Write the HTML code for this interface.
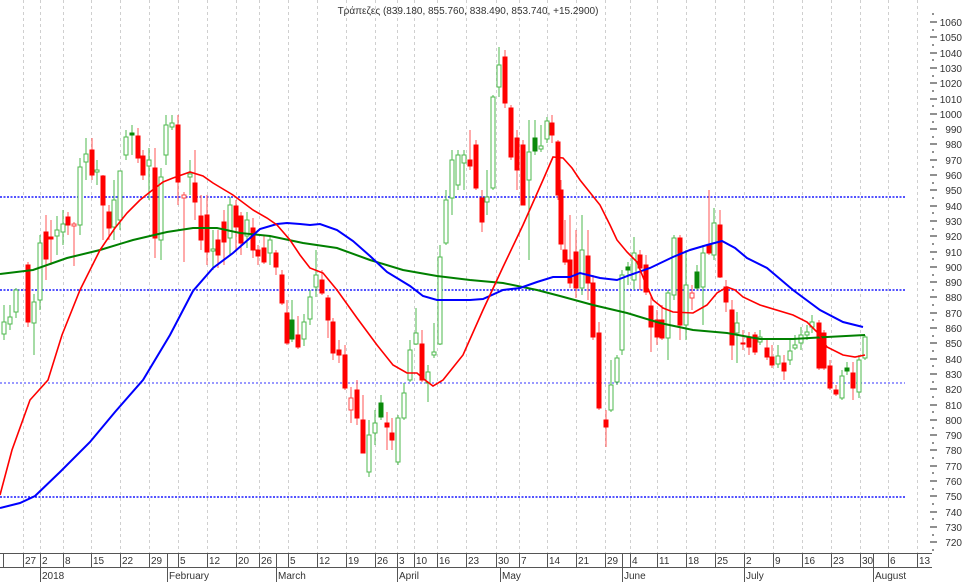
<!DOCTYPE html>
<html><head><meta charset="utf-8"><style>
html,body{margin:0;padding:0;background:#fff;}
svg{display:block;font-family:"Liberation Sans",sans-serif;}
.g{fill:#fff;stroke:#4db84d;stroke-width:1}
.r{fill:#f00;stroke:#f00;stroke-width:1}
.rh{fill:#fff;stroke:#f44;stroke-width:1}
.dg{fill:#0a8a0a;stroke:#0a8a0a;stroke-width:1}
.wg{stroke:#4db84d;stroke-width:1}
.wr{stroke:#f55;stroke-width:1}
.t{font-size:10px;fill:#333}
</style></head><body>
<svg width="966" height="582" viewBox="0 0 966 582" xmlns="http://www.w3.org/2000/svg">
<rect width="966" height="582" fill="#fff"/>
<g stroke="#cfcfcf" stroke-width="1" stroke-dasharray="3,3">
<path d="M23.5 0V553M40.5 0V553M63.5 0V553M91.5 0V553M120.5 0V553M149.5 0V553M178.5 0V553M207.5 0V553M236.5 0V553M259.5 0V553M288.5 0V553M317.5 0V553M346.5 0V553M375.5 0V553M397.5 0V553M414.5 0V553M437.5 0V553M466.5 0V553M496.5 0V553M519.5 0V553M547.5 0V553M576.5 0V553M605.5 0V553M630.5 0V553M657.5 0V553M686.5 0V553M715.5 0V553M744.5 0V553M773.5 0V553M802.5 0V553M831.5 0V553M860.5 0V553M888.5 0V553M917.5 0V553"/>
</g>
<g stroke="#1a1aff" stroke-width="1.5" stroke-dasharray="2,1.5">
<path d="M0 197H905M0 290H905M0 497H905"/>
</g>
<path d="M0 383H905" stroke="#3333ff" stroke-width="1" stroke-dasharray="2,2"/>

<text x="468" y="14" class="t" text-anchor="middle">Τράπεζες (839.180, 855.760, 838.490, 853.740, +15.2900)</text>

<!-- candles -->
<g id="c">
<line x1="4" y1="305" x2="4" y2="340" class="wg"/><rect x="2" y="322" width="4" height="12" class="g"/>
<line x1="10" y1="305" x2="10" y2="330" class="wg"/><rect x="8" y="317" width="4" height="7" class="g"/>
<line x1="16" y1="288" x2="16" y2="318" class="wg"/><rect x="14" y="290" width="4" height="22" class="g"/>
<line x1="28" y1="262" x2="28" y2="327" class="wr"/><rect x="26" y="265" width="4" height="57" class="r"/>
<line x1="34" y1="294" x2="34" y2="355" class="wg"/><rect x="32" y="302" width="4" height="21" class="g"/>
<line x1="40" y1="235" x2="40" y2="310" class="wg"/><rect x="38" y="243" width="4" height="57" class="g"/>
<line x1="46" y1="215" x2="46" y2="280" class="wr"/><rect x="44" y="232" width="4" height="27" class="r"/>
<line x1="51" y1="220" x2="51" y2="265" class="wr"/><rect x="49" y="237" width="4" height="2" class="r"/>
<line x1="57" y1="216" x2="57" y2="255" class="wg"/><rect x="55" y="230" width="4" height="6" class="g"/>
<line x1="63" y1="210" x2="63" y2="245" class="wg"/><rect x="61" y="224" width="4" height="8" class="g"/>
<line x1="68" y1="212" x2="68" y2="235" class="wr"/><rect x="66" y="217" width="4" height="8" class="r"/>
<line x1="74" y1="222" x2="74" y2="266" class="wr"/><rect x="72" y="224" width="4" height="2" class="rh"/>
<line x1="80" y1="158" x2="80" y2="235" class="wg"/><rect x="78" y="167" width="4" height="58" class="g"/>
<line x1="86" y1="138" x2="86" y2="180" class="wg"/><rect x="84" y="154" width="4" height="8" class="g"/>
<line x1="92" y1="138" x2="92" y2="180" class="wr"/><rect x="90" y="150" width="4" height="25" class="r"/>
<line x1="97" y1="160" x2="97" y2="185" class="wg"/><rect x="95" y="170" width="4" height="2" class="g"/>
<line x1="103" y1="175" x2="103" y2="240" class="wr"/><rect x="101" y="176" width="4" height="29" class="r"/>
<line x1="109" y1="205" x2="109" y2="240" class="wr"/><rect x="107" y="212" width="4" height="16" class="r"/>
<line x1="114" y1="180" x2="114" y2="240" class="wg"/><rect x="112" y="200" width="4" height="27" class="g"/>
<line x1="120" y1="171" x2="120" y2="230" class="wg"/><rect x="118" y="171" width="4" height="49" class="g"/>
<line x1="126" y1="130" x2="126" y2="160" class="wg"/><rect x="124" y="137" width="4" height="18" class="g"/>
<line x1="132" y1="125" x2="132" y2="155" class="wg"/><rect x="130" y="133" width="4" height="2" class="dg"/>
<line x1="138" y1="128" x2="138" y2="163" class="wr"/><rect x="136" y="136" width="4" height="22" class="r"/>
<line x1="143" y1="150" x2="143" y2="180" class="wr"/><rect x="141" y="156" width="4" height="19" class="r"/>
<line x1="149" y1="148" x2="149" y2="200" class="wg"/><rect x="147" y="160" width="4" height="6" class="g"/>
<line x1="155" y1="148" x2="155" y2="258" class="wr"/><rect x="153" y="168" width="4" height="70" class="r"/>
<line x1="161" y1="168" x2="161" y2="260" class="wg"/><rect x="159" y="177" width="4" height="63" class="g"/>
<line x1="166" y1="115" x2="166" y2="165" class="wg"/><rect x="164" y="125" width="4" height="30" class="g"/>
<line x1="172" y1="115" x2="172" y2="130" class="wg"/><rect x="170" y="123" width="4" height="4" class="g"/>
<line x1="178" y1="115" x2="178" y2="205" class="wr"/><rect x="176" y="125" width="4" height="57" class="r"/>
<line x1="184" y1="192" x2="184" y2="262" class="wr"/><rect x="182" y="195" width="4" height="3" class="rh"/>
<line x1="190" y1="160" x2="190" y2="195" class="wg"/><rect x="188" y="174" width="4" height="3" class="g"/>
<line x1="195" y1="150" x2="195" y2="220" class="wr"/><rect x="193" y="183" width="4" height="19" class="r"/>
<line x1="201" y1="195" x2="201" y2="250" class="wr"/><rect x="199" y="216" width="4" height="24" class="r"/>
<line x1="207" y1="195" x2="207" y2="265" class="wr"/><rect x="205" y="215" width="4" height="37" class="r"/>
<line x1="213" y1="230" x2="213" y2="270" class="wg"/><rect x="211" y="249" width="4" height="2" class="g"/>
<line x1="218" y1="230" x2="218" y2="268" class="wr"/><rect x="216" y="240" width="4" height="15" class="r"/>
<line x1="224" y1="210" x2="224" y2="265" class="wr"/><rect x="222" y="222" width="4" height="20" class="r"/>
<line x1="230" y1="197" x2="230" y2="255" class="wg"/><rect x="228" y="205" width="4" height="33" class="g"/>
<line x1="236" y1="200" x2="236" y2="252" class="wr"/><rect x="234" y="206" width="4" height="21" class="r"/>
<line x1="241" y1="212" x2="241" y2="255" class="wr"/><rect x="239" y="216" width="4" height="27" class="r"/>
<line x1="247" y1="212" x2="247" y2="248" class="wg"/><rect x="245" y="220" width="4" height="16" class="g"/>
<line x1="253" y1="218" x2="253" y2="258" class="wr"/><rect x="251" y="228" width="4" height="22" class="r"/>
<line x1="258" y1="245" x2="258" y2="265" class="wr"/><rect x="256" y="250" width="4" height="6" class="r"/>
<line x1="264" y1="235" x2="264" y2="264" class="wr"/><rect x="262" y="248" width="4" height="14" class="r"/>
<line x1="270" y1="235" x2="270" y2="265" class="wg"/><rect x="268" y="240" width="4" height="13" class="g"/>
<line x1="276" y1="250" x2="276" y2="275" class="wr"/><rect x="274" y="253" width="4" height="14" class="r"/>
<line x1="282" y1="270" x2="282" y2="305" class="wr"/><rect x="280" y="275" width="4" height="28" class="r"/>
<line x1="287" y1="300" x2="287" y2="345" class="wr"/><rect x="285" y="313" width="4" height="30" class="r"/>
<line x1="292" y1="300" x2="292" y2="342" class="wg"/><rect x="290" y="320" width="4" height="19" class="dg"/>
<line x1="298" y1="316" x2="298" y2="349" class="wr"/><rect x="296" y="335" width="4" height="12" class="r"/>
<line x1="304" y1="314" x2="304" y2="346" class="wg"/><rect x="302" y="322" width="4" height="17" class="g"/>
<line x1="310" y1="290" x2="310" y2="325" class="wg"/><rect x="308" y="297" width="4" height="22" class="g"/>
<line x1="316" y1="250" x2="316" y2="297" class="wg"/><rect x="314" y="275" width="4" height="12" class="g"/>
<line x1="322" y1="270" x2="322" y2="295" class="wr"/><rect x="320" y="280" width="4" height="13" class="r"/>
<line x1="328" y1="295" x2="328" y2="338" class="wr"/><rect x="326" y="298" width="4" height="22" class="r"/>
<line x1="333" y1="318" x2="333" y2="360" class="wr"/><rect x="331" y="322" width="4" height="31" class="r"/>
<line x1="339" y1="340" x2="339" y2="363" class="wr"/><rect x="337" y="350" width="4" height="5" class="r"/>
<line x1="345" y1="345" x2="345" y2="390" class="wr"/><rect x="343" y="355" width="4" height="33" class="r"/>
<line x1="351" y1="387" x2="351" y2="423" class="wr"/><rect x="349" y="398" width="4" height="12" class="rh"/>
<line x1="357" y1="380" x2="357" y2="425" class="wr"/><rect x="355" y="390" width="4" height="28" class="r"/>
<line x1="363" y1="395" x2="363" y2="453" class="wr"/><rect x="361" y="420" width="4" height="33" class="r"/>
<line x1="369" y1="420" x2="369" y2="477" class="wg"/><rect x="367" y="435" width="4" height="37" class="g"/>
<line x1="375" y1="410" x2="375" y2="445" class="wg"/><rect x="373" y="423" width="4" height="10" class="g"/>
<line x1="381" y1="395" x2="381" y2="420" class="wg"/><rect x="379" y="403" width="4" height="14" class="dg"/>
<line x1="387" y1="412" x2="387" y2="450" class="wr"/><rect x="385" y="423" width="4" height="4" class="r"/>
<line x1="392" y1="418" x2="392" y2="450" class="wr"/><rect x="390" y="433" width="4" height="7" class="r"/>
<line x1="398" y1="415" x2="398" y2="465" class="wg"/><rect x="396" y="418" width="4" height="44" class="g"/>
<line x1="404" y1="383" x2="404" y2="420" class="wg"/><rect x="402" y="393" width="4" height="25" class="g"/>
<line x1="410" y1="340" x2="410" y2="382" class="wg"/><rect x="408" y="350" width="4" height="30" class="g"/>
<line x1="416" y1="308" x2="416" y2="345" class="wg"/><rect x="414" y="333" width="4" height="11" class="g"/>
<line x1="422" y1="330" x2="422" y2="382" class="wr"/><rect x="420" y="344" width="4" height="36" class="r"/>
<line x1="428" y1="365" x2="428" y2="402" class="wg"/><rect x="426" y="372" width="4" height="11" class="g"/>
<line x1="434" y1="323" x2="434" y2="358" class="wg"/><rect x="432" y="352" width="4" height="3" class="g"/>
<line x1="440" y1="245" x2="440" y2="345" class="wg"/><rect x="438" y="257" width="4" height="87" class="g"/>
<line x1="446" y1="190" x2="446" y2="245" class="wg"/><rect x="444" y="200" width="4" height="43" class="g"/>
<line x1="452" y1="150" x2="452" y2="215" class="wg"/><rect x="450" y="160" width="4" height="38" class="g"/>
<line x1="458" y1="150" x2="458" y2="190" class="wg"/><rect x="456" y="155" width="4" height="30" class="g"/>
<line x1="464" y1="150" x2="464" y2="190" class="wg"/><rect x="462" y="155" width="4" height="8" class="g"/>
<line x1="470" y1="130" x2="470" y2="170" class="wr"/><rect x="468" y="160" width="4" height="6" class="r"/>
<line x1="476" y1="140" x2="476" y2="190" class="wr"/><rect x="474" y="145" width="4" height="43" class="r"/>
<line x1="482" y1="190" x2="482" y2="232" class="wr"/><rect x="480" y="198" width="4" height="24" class="r"/>
<line x1="487" y1="170" x2="487" y2="215" class="wg"/><rect x="485" y="197" width="4" height="5" class="g"/>
<line x1="493" y1="95" x2="493" y2="190" class="wg"/><rect x="491" y="97" width="4" height="91" class="g"/>
<line x1="499" y1="47" x2="499" y2="97" class="wg"/><rect x="497" y="65" width="4" height="22" class="g"/>
<line x1="505" y1="50" x2="505" y2="108" class="wr"/><rect x="503" y="57" width="4" height="46" class="r"/>
<line x1="511" y1="105" x2="511" y2="160" class="wr"/><rect x="509" y="108" width="4" height="49" class="r"/>
<line x1="517" y1="130" x2="517" y2="190" class="wr"/><rect x="515" y="138" width="4" height="32" class="r"/>
<line x1="523" y1="140" x2="523" y2="205" class="wr"/><rect x="521" y="145" width="4" height="60" class="r"/>
<line x1="529" y1="120" x2="529" y2="260" class="wg"/><rect x="527" y="152" width="4" height="28" class="g"/>
<line x1="535" y1="120" x2="535" y2="155" class="wg"/><rect x="533" y="138" width="4" height="13" class="dg"/>
<line x1="541" y1="125" x2="541" y2="152" class="wg"/><rect x="539" y="146" width="4" height="3" class="g"/>
<line x1="547" y1="117" x2="547" y2="143" class="wg"/><rect x="545" y="121" width="4" height="18" class="g"/>
<line x1="552" y1="115" x2="552" y2="143" class="wr"/><rect x="550" y="123" width="4" height="12" class="r"/>
<line x1="558" y1="140" x2="558" y2="200" class="wr"/><rect x="556" y="142" width="4" height="53" class="r"/>
<line x1="561" y1="180" x2="561" y2="250" class="wr"/><rect x="559" y="190" width="4" height="54" class="r"/>
<line x1="565" y1="220" x2="565" y2="265" class="wr"/><rect x="563" y="250" width="4" height="12" class="r"/>
<line x1="570" y1="215" x2="570" y2="288" class="wr"/><rect x="568" y="260" width="4" height="23" class="r"/>
<line x1="576" y1="230" x2="576" y2="298" class="wr"/><rect x="574" y="252" width="4" height="36" class="r"/>
<line x1="582" y1="215" x2="582" y2="295" class="wg"/><rect x="580" y="250" width="4" height="38" class="g"/>
<line x1="588" y1="230" x2="588" y2="300" class="wr"/><rect x="586" y="256" width="4" height="27" class="r"/>
<line x1="593" y1="275" x2="593" y2="340" class="wr"/><rect x="591" y="283" width="4" height="54" class="r"/>
<line x1="599" y1="322" x2="599" y2="410" class="wr"/><rect x="597" y="333" width="4" height="75" class="r"/>
<line x1="606" y1="410" x2="606" y2="447" class="wr"/><rect x="604" y="420" width="4" height="7" class="r"/>
<line x1="611" y1="360" x2="611" y2="412" class="wg"/><rect x="609" y="385" width="4" height="25" class="g"/>
<line x1="617" y1="355" x2="617" y2="385" class="wg"/><rect x="615" y="358" width="4" height="24" class="g"/>
<line x1="622" y1="270" x2="622" y2="355" class="wg"/><rect x="620" y="275" width="4" height="75" class="g"/>
<line x1="628" y1="262" x2="628" y2="285" class="wg"/><rect x="626" y="267" width="4" height="3" class="dg"/>
<line x1="634" y1="237" x2="634" y2="290" class="wg"/><rect x="632" y="253" width="4" height="27" class="g"/>
<line x1="640" y1="250" x2="640" y2="290" class="wr"/><rect x="638" y="255" width="4" height="13" class="r"/>
<line x1="646" y1="255" x2="646" y2="295" class="wr"/><rect x="644" y="265" width="4" height="27" class="r"/>
<line x1="651" y1="296" x2="651" y2="352" class="wr"/><rect x="649" y="306" width="4" height="21" class="r"/>
<line x1="657" y1="310" x2="657" y2="345" class="wr"/><rect x="655" y="320" width="4" height="17" class="r"/>
<line x1="662" y1="305" x2="662" y2="340" class="wr"/><rect x="660" y="320" width="4" height="18" class="r"/>
<line x1="668" y1="290" x2="668" y2="360" class="wg"/><rect x="666" y="293" width="4" height="45" class="g"/>
<line x1="674" y1="235" x2="674" y2="300" class="wg"/><rect x="672" y="238" width="4" height="57" class="g"/>
<line x1="680" y1="235" x2="680" y2="340" class="wr"/><rect x="678" y="238" width="4" height="87" class="r"/>
<line x1="686" y1="250" x2="686" y2="340" class="wg"/><rect x="684" y="285" width="4" height="40" class="g"/>
<line x1="692" y1="285" x2="692" y2="310" class="wr"/><rect x="690" y="293" width="4" height="5" class="rh"/>
<line x1="697" y1="265" x2="697" y2="290" class="wg"/><rect x="695" y="272" width="4" height="16" class="dg"/>
<line x1="703" y1="245" x2="703" y2="325" class="wg"/><rect x="701" y="253" width="4" height="34" class="g"/>
<line x1="709" y1="190" x2="709" y2="255" class="wr"/><rect x="707" y="245" width="4" height="8" class="r"/>
<line x1="714" y1="208" x2="714" y2="260" class="wg"/><rect x="712" y="223" width="4" height="32" class="g"/>
<line x1="720" y1="210" x2="720" y2="278" class="wr"/><rect x="718" y="225" width="4" height="52" class="r"/>
<line x1="726" y1="280" x2="726" y2="312" class="wr"/><rect x="724" y="287" width="4" height="15" class="r"/>
<line x1="732" y1="300" x2="732" y2="360" class="wr"/><rect x="730" y="310" width="4" height="35" class="r"/>
<line x1="737" y1="312" x2="737" y2="363" class="wg"/><rect x="735" y="323" width="4" height="10" class="g"/>
<line x1="743" y1="330" x2="743" y2="350" class="wr"/><rect x="741" y="343" width="4" height="1" class="r"/>
<line x1="749" y1="332" x2="749" y2="355" class="wr"/><rect x="747" y="338" width="4" height="9" class="r"/>
<line x1="755" y1="332" x2="755" y2="355" class="wr"/><rect x="753" y="335" width="4" height="17" class="r"/>
<line x1="760" y1="330" x2="760" y2="345" class="wg"/><rect x="758" y="337" width="4" height="5" class="g"/>
<line x1="767" y1="340" x2="767" y2="360" class="wr"/><rect x="765" y="348" width="4" height="9" class="r"/>
<line x1="772" y1="345" x2="772" y2="368" class="wr"/><rect x="770" y="357" width="4" height="8" class="r"/>
<line x1="778" y1="345" x2="778" y2="368" class="wg"/><rect x="776" y="356" width="4" height="8" class="g"/>
<line x1="784" y1="355" x2="784" y2="380" class="wr"/><rect x="782" y="363" width="4" height="8" class="r"/>
<line x1="790" y1="340" x2="790" y2="365" class="wg"/><rect x="788" y="351" width="4" height="9" class="g"/>
<line x1="795" y1="335" x2="795" y2="350" class="wg"/><rect x="793" y="345" width="4" height="3" class="g"/>
<line x1="801" y1="327" x2="801" y2="350" class="wg"/><rect x="799" y="335" width="4" height="8" class="g"/>
<line x1="807" y1="325" x2="807" y2="340" class="wg"/><rect x="805" y="332" width="4" height="3" class="g"/>
<line x1="812" y1="315" x2="812" y2="333" class="wg"/><rect x="810" y="322" width="4" height="5" class="g"/>
<line x1="819" y1="320" x2="819" y2="370" class="wr"/><rect x="817" y="323" width="4" height="45" class="r"/>
<line x1="824" y1="330" x2="824" y2="370" class="wr"/><rect x="822" y="333" width="4" height="35" class="r"/>
<line x1="830" y1="360" x2="830" y2="390" class="wr"/><rect x="828" y="366" width="4" height="22" class="r"/>
<line x1="836" y1="385" x2="836" y2="396" class="wr"/><rect x="834" y="390" width="4" height="4" class="r"/>
<line x1="842" y1="370" x2="842" y2="400" class="wg"/><rect x="840" y="376" width="4" height="22" class="g"/>
<line x1="847" y1="362" x2="847" y2="375" class="wg"/><rect x="845" y="368" width="4" height="3" class="dg"/>
<line x1="853" y1="362" x2="853" y2="400" class="wr"/><rect x="851" y="373" width="4" height="15" class="r"/>
<line x1="859" y1="355" x2="859" y2="398" class="wg"/><rect x="857" y="360" width="4" height="32" class="g"/>
<line x1="865" y1="335" x2="865" y2="360" class="wg"/><rect x="863" y="337" width="4" height="21" class="g"/>
</g>

<!-- moving averages -->
<polyline fill="none" stroke="#008000" stroke-width="2" points="0,274 33,270 67,258 100,250 133,240 167,232 193,228 217,228 240,233 270,236 303,243 337,248 370,260 403,270 437,276 470,280 503,283 537,290 560,296 593,305 627,313 660,323 693,330 727,333 760,339 793,339 827,337 865,335"/>
<polyline fill="none" stroke="#0000ff" stroke-width="2" points="0,508 20,503 35,496 60,472 90,442 115,412 143,380 170,335 193,291 213,268 233,253 250,238 260,229 277,224 287,223 300,224 310,225 320,224 337,230 353,241 370,256 387,272 410,286 423,296 437,300 455,300 470,300 483,299 503,290 520,288 537,282 553,277 570,277 580,273 600,278 617,280 630,275 650,268 673,257 690,250 707,245 722,241 735,248 747,258 767,268 793,290 820,310 843,322 863,327"/>
<polyline fill="none" stroke="#ff0000" stroke-width="1.6" points="0,495 12,450 30,400 48,380 62,335 80,290 100,250 115,228 127,213 140,200 150,192 163,182 173,178 190,172 203,176 213,183 233,195 253,210 267,218 277,225 290,240 300,255 310,268 323,273 337,290 357,318 377,345 393,365 407,373 417,373 425,380 433,386 443,380 463,355 483,310 503,267 523,225 543,180 553,157 563,158 572,168 580,180 600,205 610,225 617,240 627,252 637,262 645,282 653,300 663,308 673,312 693,313 707,305 717,293 727,287 735,290 743,297 760,305 793,315 807,322 817,332 827,347 843,355 855,357 865,355"/>

<!-- price axis -->
<g stroke="#222" stroke-width="1">
<path d="M930 22H937M930 37H937M930 53H937M930 68H937M930 83H937M930 99H937M930 114H937M930 129H937M930 144H937M930 160H937M930 175H937M930 190H937M930 206H937M930 221H937M930 236H937M930 252H937M930 267H937M930 282H937M930 297H937M930 313H937M930 328H937M930 343H937M930 359H937M930 374H937M930 389H937M930 405H937M930 420H937M930 435H937M930 450H937M930 466H937M930 481H937M930 496H937M930 512H937M930 527H937M930 542H937"/>
<path d="M932 14H934M932 30H934M932 45H934M932 60H934M932 76H934M932 91H934M932 106H934M932 122H934M932 137H934M932 152H934M932 167H934M932 183H934M932 198H934M932 213H934M932 229H934M932 244H934M932 259H934M932 275H934M932 290H934M932 305H934M932 320H934M932 336H934M932 351H934M932 366H934M932 382H934M932 397H934M932 412H934M932 428H934M932 443H934M932 458H934M932 473H934M932 489H934M932 504H934M932 519H934M932 535H934M932 550H934"/>
</g>
<g class="t" text-anchor="end">
<text x="962" y="26">1060</text><text x="962" y="41">1050</text><text x="962" y="57">1040</text><text x="962" y="72">1030</text><text x="962" y="87">1020</text><text x="962" y="103">1010</text><text x="962" y="118">1000</text><text x="962" y="133">990</text><text x="962" y="148">980</text><text x="962" y="164">970</text><text x="962" y="179">960</text><text x="962" y="194">950</text><text x="962" y="210">940</text><text x="962" y="225">930</text><text x="962" y="240">920</text><text x="962" y="256">910</text><text x="962" y="271">900</text><text x="962" y="286">890</text><text x="962" y="301">880</text><text x="962" y="317">870</text><text x="962" y="332">860</text><text x="962" y="347">850</text><text x="962" y="363">840</text><text x="962" y="378">830</text><text x="962" y="393">820</text><text x="962" y="409">810</text><text x="962" y="424">800</text><text x="962" y="439">790</text><text x="962" y="454">780</text><text x="962" y="470">770</text><text x="962" y="485">760</text><text x="962" y="500">750</text><text x="962" y="516">740</text><text x="962" y="531">730</text><text x="962" y="546">720</text>
</g>

<!-- date axis -->
<g stroke="#555" stroke-width="1">
<path d="M0 553.5H932M0 567.5H932"/>
<path d="M3.5 553V567M23.5 553V567M40.5 553V567M63.5 553V567M91.5 553V567M120.5 553V567M149.5 553V567M167.5 553V567M178.5 553V567M207.5 553V567M236.5 553V567M259.5 553V567M276.5 553V567M288.5 553V567M317.5 553V567M346.5 553V567M375.5 553V567M397.5 553V567M414.5 553V567M437.5 553V567M466.5 553V567M496.5 553V567M519.5 553V567M547.5 553V567M576.5 553V567M605.5 553V567M622.5 553V567M630.5 553V567M657.5 553V567M686.5 553V567M715.5 553V567M744.5 553V567M773.5 553V567M802.5 553V567M831.5 553V567M860.5 553V567M873.5 553V567M888.5 553V567M917.5 553V567"/>
<path d="M40.5 567V582M167.5 567V582M276.5 567V582M397.5 567V582M500.5 567V582M622.5 567V582M744.5 567V582M873.5 567V582"/>
</g>
<g class="t">
<text x="25" y="564">27</text><text x="42" y="564">2</text><text x="65" y="564">8</text><text x="93" y="564">15</text><text x="122" y="564">22</text><text x="151" y="564">29</text><text x="180" y="564">5</text><text x="209" y="564">12</text><text x="238" y="564">20</text><text x="261" y="564">26</text><text x="290" y="564">5</text><text x="319" y="564">12</text><text x="348" y="564">19</text><text x="377" y="564">26</text><text x="399" y="564">3</text><text x="416" y="564">10</text><text x="439" y="564">16</text><text x="468" y="564">23</text><text x="498" y="564">30</text><text x="521" y="564">7</text><text x="549" y="564">14</text><text x="578" y="564">21</text><text x="607" y="564">29</text><text x="632" y="564">4</text><text x="659" y="564">11</text><text x="688" y="564">18</text><text x="717" y="564">25</text><text x="746" y="564">2</text><text x="775" y="564">9</text><text x="804" y="564">16</text><text x="833" y="564">23</text><text x="862" y="564">30</text><text x="890" y="564">6</text><text x="919" y="564">13</text>
<text x="42" y="579">2018</text><text x="169" y="579">February</text><text x="278" y="579">March</text><text x="399" y="579">April</text><text x="502" y="579">May</text><text x="624" y="579">June</text><text x="746" y="579">July</text><text x="875" y="579">August</text>
</g>
</svg>
</body></html>
